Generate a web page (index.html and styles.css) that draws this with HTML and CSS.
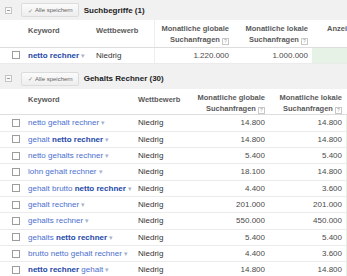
FILE: index.html
```html
<!DOCTYPE html>
<html lang="de">
<head>
<meta charset="utf-8">
<link rel="stylesheet" href="styles.css">
</head>
<body>
<div class="page">
  <section class="group g1">
    <div class="bar">
      <span class="collapse"></span>
      <span class="save"><span class="tick">✓</span> Alle speichern</span>
      <span class="title">Suchbegriffe (1)</span>
    </div>
    <table class="kw">
      <colgroup>
        <col class="c-cb"><col class="c-key"><col class="c-comp"><col class="c-glob"><col class="c-lok"><col class="c-ads">
      </colgroup>
      <thead>
        <tr>
          <th></th>
          <th class="l">Keyword</th>
          <th class="l">Wettbewerb</th>
          <th class="r">Monatliche globale<br>Suchanfragen <span class="help">?</span></th>
          <th class="r">Monatliche lokale<br>Suchanfragen <span class="help">?</span></th>
          <th class="l ads">Anzeigenanteil</th>
        </tr>
      </thead>
      <tbody>
        <tr>
          <td><span class="cb"></span></td>
          <td class="key"><b>netto rechner</b> <span class="dd">▾</span></td>
          <td>Niedrig</td>
          <td class="r">1.220.000</td>
          <td class="r">1.000.000</td>
          <td class="ads"></td>
        </tr>
      </tbody>
    </table>
  </section>
  <div class="gap"></div>
  <section class="group g2">
    <div class="bar">
      <span class="collapse"></span>
      <span class="save"><span class="tick">✓</span> Alle speichern</span>
      <span class="title">Gehalts Rechner (30)</span>
    </div>
    <table class="kw">
      <colgroup>
        <col class="c-cb"><col class="c-key"><col class="c-comp"><col class="c-glob"><col class="c-lok"><col class="c-ads">
      </colgroup>
      <thead>
        <tr>
          <th></th>
          <th class="l">Keyword</th>
          <th class="l">Wettbewerb</th>
          <th class="r">Monatliche globale<br>Suchanfragen <span class="help">?</span></th>
          <th class="r">Monatliche lokale<br>Suchanfragen <span class="help">?</span></th>
          <th class="ads"></th>
        </tr>
      </thead>
      <tbody>
        <tr><td><span class="cb"></span></td><td class="key">netto gehalt rechner <span class="dd">▾</span></td><td>Niedrig</td><td class="r">14.800</td><td class="r">14.800</td><td class="ads"></td></tr>
        <tr><td><span class="cb"></span></td><td class="key">gehalt <b>netto rechner</b> <span class="dd">▾</span></td><td>Niedrig</td><td class="r">14.800</td><td class="r">14.800</td><td class="ads"></td></tr>
        <tr><td><span class="cb"></span></td><td class="key">netto gehalts rechner <span class="dd">▾</span></td><td>Niedrig</td><td class="r">5.400</td><td class="r">5.400</td><td class="ads"></td></tr>
        <tr><td><span class="cb"></span></td><td class="key">lohn gehalt rechner <span class="dd">▾</span></td><td>Niedrig</td><td class="r">18.100</td><td class="r">14.800</td><td class="ads"></td></tr>
        <tr><td><span class="cb"></span></td><td class="key">gehalt brutto <b>netto rechner</b> <span class="dd">▾</span></td><td>Niedrig</td><td class="r">4.400</td><td class="r">3.600</td><td class="ads"></td></tr>
        <tr><td><span class="cb"></span></td><td class="key">gehalt rechner <span class="dd">▾</span></td><td>Niedrig</td><td class="r">201.000</td><td class="r">201.000</td><td class="ads"></td></tr>
        <tr><td><span class="cb"></span></td><td class="key">gehalts rechner <span class="dd">▾</span></td><td>Niedrig</td><td class="r">550.000</td><td class="r">450.000</td><td class="ads"></td></tr>
        <tr><td><span class="cb"></span></td><td class="key">gehalts <b>netto rechner</b> <span class="dd">▾</span></td><td>Niedrig</td><td class="r">5.400</td><td class="r">5.400</td><td class="ads"></td></tr>
        <tr><td><span class="cb"></span></td><td class="key">brutto netto gehalt rechner <span class="dd">▾</span></td><td>Niedrig</td><td class="r">4.400</td><td class="r">3.600</td><td class="ads"></td></tr>
        <tr><td><span class="cb"></span></td><td class="key"><b>netto rechner</b> gehalt <span class="dd">▾</span></td><td>Niedrig</td><td class="r">14.800</td><td class="r">14.800</td><td class="ads"></td></tr>
      </tbody>
    </table>
  </section>
</div>
</body>
</html>
```

FILE: styles.css
```css
html, body {
  margin: 0;
  padding: 0;
  background: #ffffff;
  overflow: hidden;
}
.page {
  width: 347px;
  height: 276px;
  overflow: hidden;
  font-family: "Liberation Sans", Arial, sans-serif;
  font-size: 8px;
  color: #333333;
}
.bar {
  height: 20px;
  background: #f1f1f1;
  display: flex;
  align-items: center;
  padding-left: 5px;
  box-sizing: border-box;
}
.collapse {
  width: 7px;
  height: 7px;
  box-sizing: border-box;
  border: 1px solid #c4c4c4;
  background: #fafafa;
  position: relative;
  margin-right: 9px;
}
.collapse::after {
  content: "";
  position: absolute;
  left: 1px;
  right: 1px;
  top: 2px;
  height: 1px;
  background: #9a9a9a;
}
.save {
  height: 14px;
  box-sizing: border-box;
  padding: 0 5px 0 6px;
  border: 1px solid #dcdcdc;
  border-radius: 2px;
  background: linear-gradient(#fbfbfb, #eeeeee);
  font-size: 6px;
  color: #666666;
  display: flex;
  align-items: center;
  margin-right: 5px;
}
.tick {
  font-size: 6px;
  color: #888888;
  margin-right: 2px;
}
.title {
  font-weight: bold;
  color: #222222;
  font-size: 8px;
}
.gap {
  height: 5px;
  background: #f1f1f1;
}
.kw {
  border-collapse: collapse;
  table-layout: fixed;
  width: 380px;
}
.g1 .c-cb { width: 24px; }
.g1 .c-key { width: 68px; }
.g1 .c-comp { width: 62px; }
.g1 .c-glob { width: 79px; }
.g1 .c-lok { width: 79px; }
.g1 .c-ads { width: 68px; }
.g2 .c-cb { width: 24px; }
.g2 .c-key { width: 110px; }
.g2 .c-comp { width: 55px; }
.g2 .c-glob { width: 80px; }
.g2 .c-lok { width: 77px; }
.g2 .c-ads { width: 34px; }
.kw th {
  height: 27px;
  font-weight: bold;
  color: #5a5a5a;
  font-size: 7.5px;
  line-height: 11px;
  vertical-align: top;
  padding: 3px 4px 0 4px;
  box-sizing: border-box;
  border-bottom: 1px solid #dddddd;
  white-space: nowrap;
  overflow: hidden;
}
.kw th.l { text-align: left; padding-top: 5px; }
.kw th.r { text-align: right; }
.kw th.ads { padding: 3px 0 0 15px; }
.g1 .kw th.ads { background: #ffffff; }
.g2 .kw th { height: 26px; }
.kw td {
  height: 16.33px;
  padding: 0 4px;
  box-sizing: border-box;
  border-bottom: 1px solid #ebebeb;
  white-space: nowrap;
  overflow: hidden;
}
.kw td:first-child { padding: 0 0 0 12px; }
.kw th:first-child { padding: 0; }
.kw td.key { padding-left: 4px; color: #4a6fd0; }
.key b { color: #2346a8; font-weight: bold; }
.dd { color: #a8b4cc; font-size: 7px; }
.kw td.r { text-align: right; color: #4a4a4a; }
.kw td.ads { background: #e6f2e6; }
.g1 .kw td:nth-child(3), .g1 .kw th:nth-child(3) { border-right: 1px solid #eeeeee; }
.cb {
  display: block;
  width: 8px;
  height: 8px;
  box-sizing: border-box;
  border: 1px solid #9c9c9c;
  background: #ffffff;
}
.help {
  display: inline-block;
  width: 7px;
  height: 7px;
  box-sizing: border-box;
  border: 1px solid #c8c8c8;
  font-size: 5px;
  line-height: 5px;
  text-align: center;
  color: #999999;
  font-weight: normal;
  vertical-align: -1px;
}
```
